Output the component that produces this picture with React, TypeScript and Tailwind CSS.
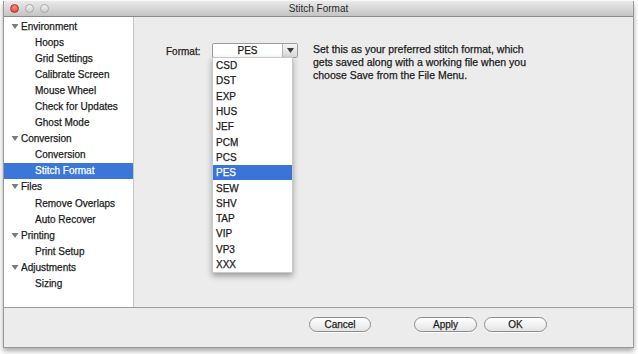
import React from 'react';

const sections = [
  { title: 'Environment', items: ['Hoops', 'Grid Settings', 'Calibrate Screen', 'Mouse Wheel', 'Check for Updates', 'Ghost Mode'] },
  { title: 'Conversion', items: ['Conversion', 'Stitch Format'] },
  { title: 'Files', items: ['Remove Overlaps', 'Auto Recover'] },
  { title: 'Printing', items: ['Print Setup'] },
  { title: 'Adjustments', items: ['Sizing'] },
];

const formats = ['CSD', 'DST', 'EXP', 'HUS', 'JEF', 'PCM', 'PCS', 'PES', 'SEW', 'SHV', 'TAP', 'VIP', 'VP3', 'XXX'];

const Disclosure = () => (
  <svg width="8" height="7" viewBox="0 0 8 7" className="mr-[2px]">
    <path d="M0.5 1 L7.5 1 L4 6 Z" fill="#7b7b7b" />
  </svg>
);

const AquaButton = ({ label, width }: { label: string; width: string }) => (
  <button
    type="button"
    className={`${width} h-[15px] flex items-center justify-center rounded-full border border-[#8c8c8c] bg-gradient-to-b from-white to-[#e4e4e4] text-[10px] leading-[13px] text-[#1e1e1e] shadow-[0_1px_0_rgba(255,255,255,0.8)]`}
  >
    {label}
  </button>
);

export default function App() {
  return (
    <div
      className="w-[638px] h-[354px] bg-white pl-[3px] pr-[4px] pt-[1px] pb-[6px] overflow-hidden [-webkit-text-stroke:0.25px]"
      style={{ fontFamily: '"Liberation Sans", Arial, sans-serif' }}
    >
      <div className="h-full flex flex-col bg-[#ececec] border-x border-b border-[#9a9a9a] shadow-[0_3px_5px_rgba(0,0,0,0.35)]">
        {/* Title bar */}
        <div className="h-[16px] relative flex items-center justify-center bg-gradient-to-b from-[#eaeaea] to-[#c4c4c4] border-b border-[#8a8a8a] rounded-t-[4px]">
          <div className="absolute left-[6px] top-[3px] flex gap-[6px]">
            <span className="w-[9px] h-[9px] rounded-full bg-[radial-gradient(circle_at_50%_35%,#ff8d86,#d8302a)] border border-[#a8403a]" />
            <span className="w-[9px] h-[9px] rounded-full bg-gradient-to-b from-[#f2f2f2] to-[#cfcfcf] border border-[#a9a9a9]" />
            <span className="w-[9px] h-[9px] rounded-full bg-gradient-to-b from-[#f2f2f2] to-[#cfcfcf] border border-[#a9a9a9]" />
          </div>
          <span className="text-[10px] text-[#2a2a2a] [-webkit-text-stroke:0px]">Stitch Format</span>
        </div>

        {/* Body */}
        <div className="h-[290px] flex">
          <div className="w-[130px] bg-white border-r border-[#c6c6c6] pt-[1px]">
            {sections.map((s) => (
              <div key={s.title}>
                <div className="h-[16.1px] flex items-center pl-[7px] text-[10px] text-[#1c1c1c]">
                  <Disclosure />
                  {s.title}
                </div>
                {s.items.map((it) => {
                  const sel = it === 'Stitch Format';
                  return (
                    <div
                      key={it}
                      className={`h-[16.1px] flex items-center pl-[31px] text-[10px] ${sel ? 'bg-[#3a77d8] text-white' : 'text-[#1c1c1c]'}`}
                    >
                      {it}
                    </div>
                  );
                })}
              </div>
            ))}
          </div>

          <div className="flex-1 relative pt-[26px] pl-[32px]">
            <div className="flex items-start">
              <span className="text-[10px] text-[#1c1c1c] mt-[1px] w-[46px]">Format:</span>
              <div className="w-[86px] h-[15px] flex border border-[#9c9c9c] rounded-[2px] bg-white">
                <span className="flex-1 text-center text-[10px] leading-[13px] text-[#1c1c1c]">PES</span>
                <span className="w-[15px] flex items-center justify-center border-l border-[#b5b5b5] bg-gradient-to-b from-[#f4f4f4] to-[#d8d8d8]">
                  <svg width="7" height="5" viewBox="0 0 7 5">
                    <path d="M0 0 L7 0 L3.5 5 Z" fill="#3a3a3a" />
                  </svg>
                </span>
              </div>
              <p className="ml-[15px] text-[10.5px] leading-[13px] text-[#1c1c1c] w-[218px]">
                Set this as your preferred stitch format, which gets saved along with a working file when you choose Save from the File Menu.
              </p>
            </div>

            {/* open pop-up menu */}
            <div className="absolute left-[78px] top-[40px] w-[81px] bg-white border border-[#c9c9c9] shadow-[0_3px_6px_rgba(0,0,0,0.35)]">
              {formats.map((f) => (
                <div
                  key={f}
                  className={`h-[15.3px] flex items-center pl-[3px] text-[10px] ${f === 'PES' ? 'bg-[#3a74d8] text-white' : 'text-[#1c1c1c]'}`}
                >
                  {f}
                </div>
              ))}
            </div>
          </div>
        </div>

        {/* Footer */}
        <div className="flex-1 border-t border-[#9c9c9c] flex items-start pt-[9px]">
          <div className="ml-[305px] flex">
            <AquaButton label="Cancel" width="w-[62px]" />
          </div>
          <div className="ml-[43px] flex gap-[7px]">
            <AquaButton label="Apply" width="w-[63px]" />
            <AquaButton label="OK" width="w-[63px]" />
          </div>
        </div>
      </div>
    </div>
  );
}
